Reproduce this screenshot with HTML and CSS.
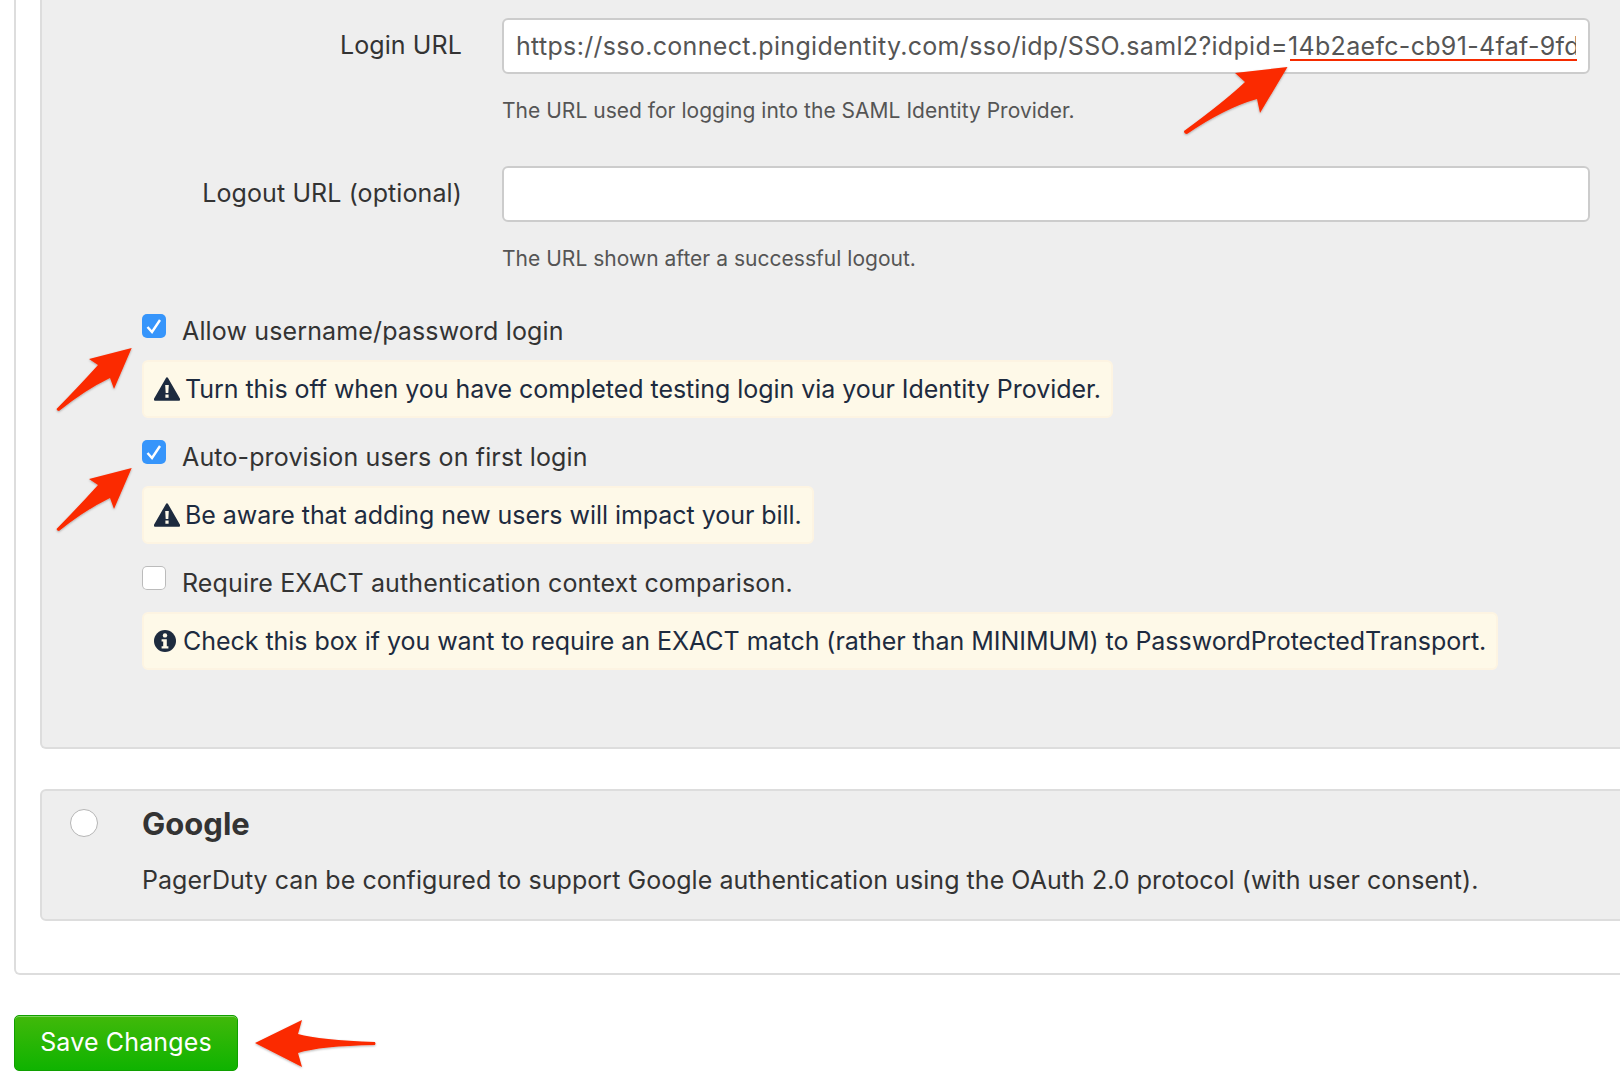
FILE: index.html
```html
<!DOCTYPE html>
<html lang="en">
<head>
<meta charset="utf-8">
<title>Single Sign-On</title>
<link rel="stylesheet" href="styles.css">
</head>
<body>
<form class="page">
  <div class="card">
    <section class="panel panel-saml">
      <div class="field">
        <label class="field-label">Login URL</label>
        <div class="field-body">
          <input class="text-input" type="text" value="https://sso.connect.pingidentity.com/sso/idp/SSO.saml2?idpid=14b2aefc-cb91-4faf-9fd0-7c3d1e8a5b21">
          <p class="help">The URL used for logging into the SAML Identity Provider.</p>
        </div>
      </div>
      <div class="field">
        <label class="field-label">Logout URL (optional)</label>
        <div class="field-body">
          <input class="text-input" type="text">
          <p class="help">The URL shown after a successful logout.</p>
        </div>
      </div>
      <div class="option">
        <label class="check-row">
          <span class="check is-on"><svg viewBox="0 0 24 24" width="24" height="24"><path d="M5.5 13L10 18L18 6" fill="none" stroke="#fff" stroke-width="2.4"/></svg></span>
          <span>Allow username/password login</span>
        </label>
        <div class="note"><svg class="note-icon" viewBox="0 0 26 24" width="26" height="24"><path d="M13 1.5L25 22.5H1z" fill="#1d2b3f" stroke="#1d2b3f" stroke-width="2.4" stroke-linejoin="round"/><path d="M11.2 8h3.6l-.5 8h-2.6zM11.4 17.6h3.2v3.2h-3.2z" fill="#fef9e8"/></svg><span>Turn this off when you have completed testing login via your Identity Provider.</span></div>
      </div>
      <div class="option">
        <label class="check-row">
          <span class="check is-on"><svg viewBox="0 0 24 24" width="24" height="24"><path d="M5.5 13L10 18L18 6" fill="none" stroke="#fff" stroke-width="2.4"/></svg></span>
          <span>Auto-provision users on first login</span>
        </label>
        <div class="note"><svg class="note-icon" viewBox="0 0 26 24" width="26" height="24"><path d="M13 1.5L25 22.5H1z" fill="#1d2b3f" stroke="#1d2b3f" stroke-width="2.4" stroke-linejoin="round"/><path d="M11.2 8h3.6l-.5 8h-2.6zM11.4 17.6h3.2v3.2h-3.2z" fill="#fef9e8"/></svg><span>Be aware that adding new users will impact your bill.</span></div>
      </div>
      <div class="option">
        <label class="check-row">
          <span class="check"></span>
          <span>Require EXACT authentication context comparison.</span>
        </label>
        <div class="note"><svg class="note-icon note-icon-info" viewBox="0 0 22 22" width="22" height="22"><circle cx="11" cy="11" r="11" fill="#1d2b3f"/><circle cx="11" cy="5.4" r="2.2" fill="#fef9e8"/><path d="M7.6 9.2h5.2v7h1.6v2.4H7.6v-2.4h1.6v-4.6H7.6z" fill="#fef9e8"/></svg><span>Check this box if you want to require an EXACT match (rather than MINIMUM) to PasswordProtectedTransport.</span></div>
      </div>
    </section>
    <section class="panel panel-google">
      <span class="radio"></span>
      <div>
        <h3 class="panel-title">Google</h3>
        <p class="panel-text">PagerDuty can be configured to support Google authentication using the OAuth 2.0 protocol (with user consent).</p>
      </div>
    </section>
  </div>
  <button class="save" type="button">Save Changes</button>
</form>

<span class="url-underline"></span>
<svg class="overlay" viewBox="0 0 1620 1086" width="1620" height="1086">
  <defs><filter id="shade" x="-20%" y="-20%" width="140%" height="140%"><feDropShadow dx="0" dy="1" stdDeviation="1.2" flood-color="#000" flood-opacity=".3"/></filter></defs>
  <g fill="#fb2a00" filter="url(#shade)">
    <path d="M1287.5 67L1235 73L1245 82Q1225 101 1184 131Q1184 134 1187 134Q1225 108 1257 99L1260 113Z"/>
    <path d="M131.7 348L89 359L98 365Q80 385 56.5 409Q57 411 59 411Q85 390 110 378L114 389Z"/>
    <path d="M131.7 468L89 479L98 485Q80 505 56.5 529Q57 531 59 531Q85 510 110 498L114 509Z"/>
    <path d="M255 1043L302 1020L298 1034Q320 1040 375 1042Q376 1044 375 1045Q320 1046 298 1053L302 1067Z"/>
  </g>
</svg>
</body>
</html>
```
FILE: styles.css
```css
* { box-sizing: border-box; }
html, body { margin: 0; padding: 0; background: #fff; }
body {
  width: 1620px;
  height: 1086px;
  overflow: hidden;
  position: relative;
  font-family: Inter, "Liberation Sans", sans-serif;
  font-size: 25px;
  color: #333;
}
.page { padding-left: 14px; width: 1720px; }
.card {
  border: 2px solid #ddd;
  border-top: 0;
  border-radius: 0 0 6px 6px;
  padding: 0 0 52px 24px;
}
.panel {
  background: #eee;
  border: 2px solid #ddd;
  border-radius: 6px;
}
.panel-saml {
  border-top: 0;
  border-radius: 0 0 6px 6px;
  padding: 18px 0 0;
  height: 749px;
}
.field {
  display: grid;
  grid-template-columns: 420px 1088px;
  column-gap: 40px;
  height: 148px;
}
.field-label {
  text-align: right;
  line-height: 55px;
  letter-spacing: .1px;
  white-space: nowrap;
}
.text-input {
  display: block;
  width: 100%;
  height: 56px;
  padding: 0 12px;
  border: 2px solid #ccc;
  border-radius: 6px;
  background: #fff;
  font: inherit;
  letter-spacing: .32px;
  color: #555;
}
.help {
  margin: 23px 0 0;
  font-size: 21px;
  line-height: 28px;
  letter-spacing: .02px;
  color: #555;
}
.option { margin-left: 100px; padding-bottom: 22px; }
.check-row {
  display: flex;
  gap: 16px;
  height: 46px;
  line-height: 34px;
  letter-spacing: .14px;
}
.check {
  flex: none;
  width: 24px;
  height: 24px;
  border-radius: 5px;
  background: #fff;
  box-shadow: inset 0 0 0 1px #bbb;
}
.check.is-on { background: #3695fb; box-shadow: none; }
.check svg { display: block; }
.note {
  display: flex;
  align-items: center;
  width: fit-content;
  height: 58px;
  padding: 0 10px 1px;
  background: #fef9e8;
  border: 2px solid #fdf4e2;
  border-radius: 6px;
  color: #1d2b3f;
  letter-spacing: -.04px;
  white-space: nowrap;
}
.note-icon { flex: none; margin: 0 5px 0 0; }
.note-icon-info { margin-right: 7px; }
.panel-google {
  display: flex;
  margin-top: 40px;
  height: 132px;
  padding: 15px 0 0 28px;
  gap: 44px;
}
.radio {
  flex: none;
  width: 28px;
  height: 28px;
  margin-top: 3px;
  border-radius: 50%;
  background: #fff;
  border: 1px solid #b5b5b5;
}
.panel-title {
  margin: 0;
  font-size: 31px;
  line-height: 36px;
  font-weight: 700;
  color: #333;
}
.panel-text { margin: 20px 0 0; line-height: 36px; letter-spacing: .05px; white-space: nowrap; }
.save {
  display: block;
  margin-top: 40px;
  width: 224px;
  height: 56px;
  border: 1px solid #10a000;
  border-radius: 5px;
  background: linear-gradient(#41b90a, #0fb300);
  box-shadow: inset 0 1px 0 #7fd35c;
  color: #fff;
  font: inherit;
  letter-spacing: .15px;
  padding: 0 0 3px;
}
.url-underline {
  position: absolute;
  left: 1290px;
  top: 59px;
  width: 287px;
  height: 2px;
  background: #f52b00;
}
.overlay { position: absolute; left: 0; top: 0; pointer-events: none; }
```
